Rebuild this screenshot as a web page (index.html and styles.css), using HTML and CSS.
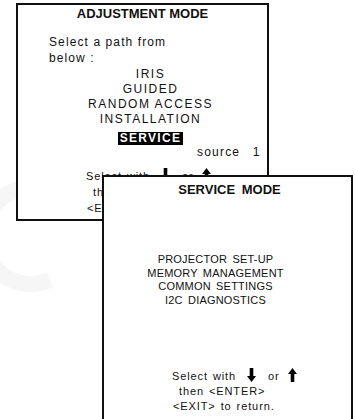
FILE: index.html
```html
<html lang="en">
<head>
  <meta charset="UTF-8" />
  <title>Adjustment mode</title>
  <link rel="stylesheet" href="styles.css">
</head>

<body>
  <div class="desk">
    <svg class="mark" width="120" height="160" viewBox="0 0 120 160">
      <path d="M70 12 A48 48 0 1 0 70 100" fill="none" stroke="#f6f6f6" stroke-width="16"/>
    </svg>

    <!-- fenetre du fond -->
    <div class="win win-adjust">
      <div class="title">ADJUSTMENT MODE</div>
      <div class="intro">Select a path from<br>below :</div>
      <ul class="menu">
        <li>IRIS</li>
        <li>GUIDED</li>
        <li>RANDOM ACCESS</li>
        <li>INSTALLATION</li>
        <li class="current"><span class="sel">SERVICE</span></li>
      </ul>
      <div class="source">source 1</div>
      <div class="hint">
        <div>Select with <svg class="arrow" width="9" height="14" viewBox="0 0 9 14"><path d="M2.7 0h3.6v8h2.7l-4.5 6L0 8h2.7z"/></svg> or <svg class="arrow up" width="9" height="14" viewBox="0 0 9 14"><path d="M2.7 14h3.6V6h2.7L4.5 0 0 6h2.7z"/></svg></div>
        <div class="l2">then &lt;ENTER&gt;</div>
        <div class="l3">&lt;EXIT&gt; to return.</div>
      </div>
    </div>

    <!-- fenetre du dessus -->
    <div class="win win-service">
      <div class="title">SERVICE MODE</div>
      <ul class="menu">
        <li>PROJECTOR SET-UP</li>
        <li>MEMORY MANAGEMENT</li>
        <li>COMMON SETTINGS</li>
        <li>I2C DIAGNOSTICS</li>
      </ul>
      <div class="hint">
        <div>Select with <svg class="arrow" width="9" height="14" viewBox="0 0 9 14"><path d="M2.7 0h3.6v8h2.7l-4.5 6L0 8h2.7z"/></svg> or <svg class="arrow up" width="9" height="14" viewBox="0 0 9 14"><path d="M2.7 14h3.6V6h2.7L4.5 0 0 6h2.7z"/></svg></div>
        <div class="l2">then &lt;ENTER&gt;</div>
        <div class="l3">&lt;EXIT&gt; to return.</div>
      </div>
    </div>
  </div>
</body>
</html>
```

FILE: styles.css
```css
body {
  margin: 0;
  background: #fff;
  overflow: hidden;
  font-family: "Liberation Sans", Arial, sans-serif;
  color: #111;
}

.desk {
  position: relative;
  width: 355px;
  height: 419px;
  overflow: hidden;
}

.mark {
  position: absolute;
  left: -20px;
  top: 180px;
}

.win {
  background: #fff;
  border: 2px solid #111;
  box-sizing: border-box;
}

.win-adjust {
  position: relative;
  margin: 3px 0 0 16px;
  width: 253px;
  height: 218px;
}

.win-service {
  position: absolute;
  left: 102px;
  top: 175px;
  width: 251px;
  height: 270px;
}

.title {
  font-size: 13px;
  font-weight: bold;
  line-height: 16px;
  text-align: center;
}

.win-adjust .title {
  padding-top: 1px;
}

.win-service .title {
  padding: 5px 0 0 4px;
  word-spacing: 3px;
}

.intro {
  margin: 12px 0 0 31px;
  font-size: 12px;
  line-height: 16px;
  letter-spacing: 1.1px;
}

.menu {
  list-style: none;
  margin: 1px 0 0;
  padding: 0 0 0 16px;
  font-size: 12px;
  line-height: 15px;
  letter-spacing: 1.5px;
  text-align: center;
}

.menu .current {
  margin-top: 4px;
}

.sel {
  display: inline-block;
  background: #000;
  color: #fff;
  font-weight: bold;
  line-height: 13px;
  padding: 0 2px;
  letter-spacing: 1.3px;
}

.source {
  margin: -1px 0 0 179px;
  font-size: 12px;
  line-height: 15px;
  letter-spacing: 1.2px;
  word-spacing: 8px;
}

.hint {
  margin: 8px 0 0 68px;
  font-size: 11px;
  line-height: 16px;
  letter-spacing: 0.9px;
  word-spacing: 1px;
  white-space: nowrap;
}

.hint .l2 {
  padding-left: 7px;
}

.hint .l3 {
  padding-left: 1px;
}

.arrow {
  vertical-align: -2px;
  margin: 0 7px 0 6px;
  fill: #000;
}

.arrow.up {
  margin: 0 0 0 3px;
}

.win-service .menu {
  margin-top: 55px;
  padding: 0 24px 0 0;
  font-size: 11px;
  line-height: 13.5px;
  letter-spacing: 0.2px;
  word-spacing: 2px;
}

.win-service .hint {
  margin-top: 61px;
  line-height: 15px;
}
```
